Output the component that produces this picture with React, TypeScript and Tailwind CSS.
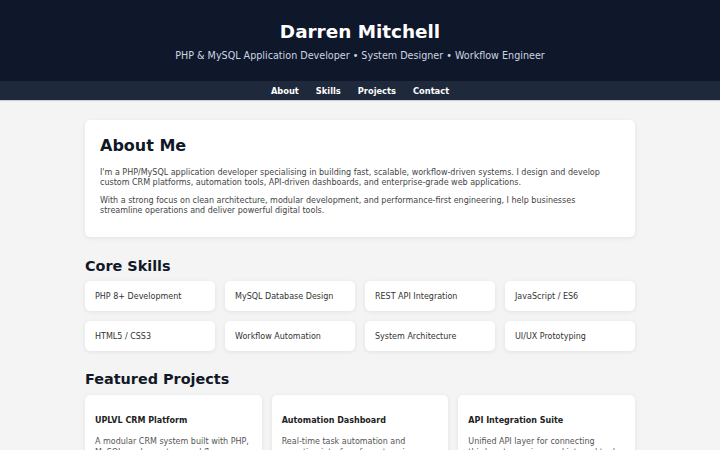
import React from "react";

const skills = [
  "PHP 8+ Development",
  "MySQL Database Design",
  "REST API Integration",
  "JavaScript / ES6",
  "HTML5 / CSS3",
  "Workflow Automation",
  "System Architecture",
  "UI/UX Prototyping",
];

const projects = [
  {
    title: "UPLVL CRM Platform",
    body: (
      <>A modular CRM system built with PHP, MySQL, and a custom workflow architecture for managing clients, leads and pipelines.</>
    ),
  },
  {
    title: "Automation Dashboard",
    body: (
      <>Real-time task automation and reporting interface for enterprise teams, with scheduled jobs and live status tracking.</>
    ),
  },
  {
    title: "API Integration Suite",
    body: (
      <>
        Unified API layer for connecting <span className="whitespace-nowrap">third-party</span> services and internal tools through a single secure gateway.
      </>
    ),
  },
];

export default function App() {
  return (
    <div className="min-h-screen bg-[#f4f4f4] font-['DejaVu_Sans',sans-serif] text-[8px] leading-[10px] text-[#333]">
      {/* header */}
      <header className="bg-[#0f172a] pt-[21px] pb-[19px] text-center text-white">
        <h1 className="text-[18.4px] leading-[22px] font-bold">Darren Mitchell</h1>
        <p className="mt-[6px] text-[9.6px] leading-[13px] text-[#cbd5e1]">
          PHP &amp; MySQL Application Developer • System Designer • Workflow Engineer
        </p>
      </header>

      <nav className="flex h-[19px] items-center justify-center gap-[17px] bg-[#1e293b] shadow-[0_1px_1px_rgba(0,0,0,0.15)]">
        {["About", "Skills", "Projects", "Contact"].map((l) => (
          <a key={l} className="text-[8.3px] leading-[10px] font-bold text-white">
            {l}
          </a>
        ))}
      </nav>

      <main className="mx-auto w-[550px] pt-[20px] pb-[20px]">
        {/* about */}
        <section className="rounded-[5px] bg-white px-[15px] pt-[16px] pb-[15px] shadow-[0_1px_4px_rgba(0,0,0,0.08)]">
          <h2 className="text-[16px] leading-[20px] font-bold text-[#111827]">About Me</h2>
          <p className="mt-[12px] text-[#444]">
            I'm a PHP/MySQL application developer specialising in building fast, scalable, workflow-driven systems. I design and develop custom CRM platforms, automation tools, API-driven dashboards, and enterprise-grade web applications.
          </p>
          <p className="mt-[8px] mb-[6px] text-[#444]">
            With a strong focus on clean architecture, modular development, and performance-first engineering, I help businesses streamline operations and deliver powerful digital tools.
          </p>
        </section>

        {/* skills */}
        <section className="mt-[20px]">
          <h2 className="text-[14.4px] leading-[18px] font-bold text-[#111827]">Core Skills</h2>
          <div className="mt-[6px] grid grid-cols-4 gap-[10px]">
            {skills.map((s) => (
              <div
                key={s}
                className="flex h-[30px] items-center rounded-[5px] bg-white px-[10px] pt-[2px] text-[#333] shadow-[0_1px_4px_rgba(0,0,0,0.08)]"
              >
                {s}
              </div>
            ))}
          </div>
        </section>

        {/* projects */}
        <section className="mt-[19px]">
          <h2 className="text-[14.4px] leading-[18px] font-bold text-[#111827]">Featured Projects</h2>
          <div className="mt-[7px] grid grid-cols-3 gap-[10px]">
            {projects.map((p) => (
              <div
                key={p.title}
                className="rounded-[5px] bg-white px-[10px] pt-[21px] pb-[15px] shadow-[0_1px_4px_rgba(0,0,0,0.08)]"
              >
                <h3 className="text-[8px] leading-[10px] font-bold text-[#222]">{p.title}</h3>
                <p className="mt-[10px] leading-[11px] text-[#555]">{p.body}</p>
              </div>
            ))}
          </div>
        </section>
      </main>
    </div>
  );
}
